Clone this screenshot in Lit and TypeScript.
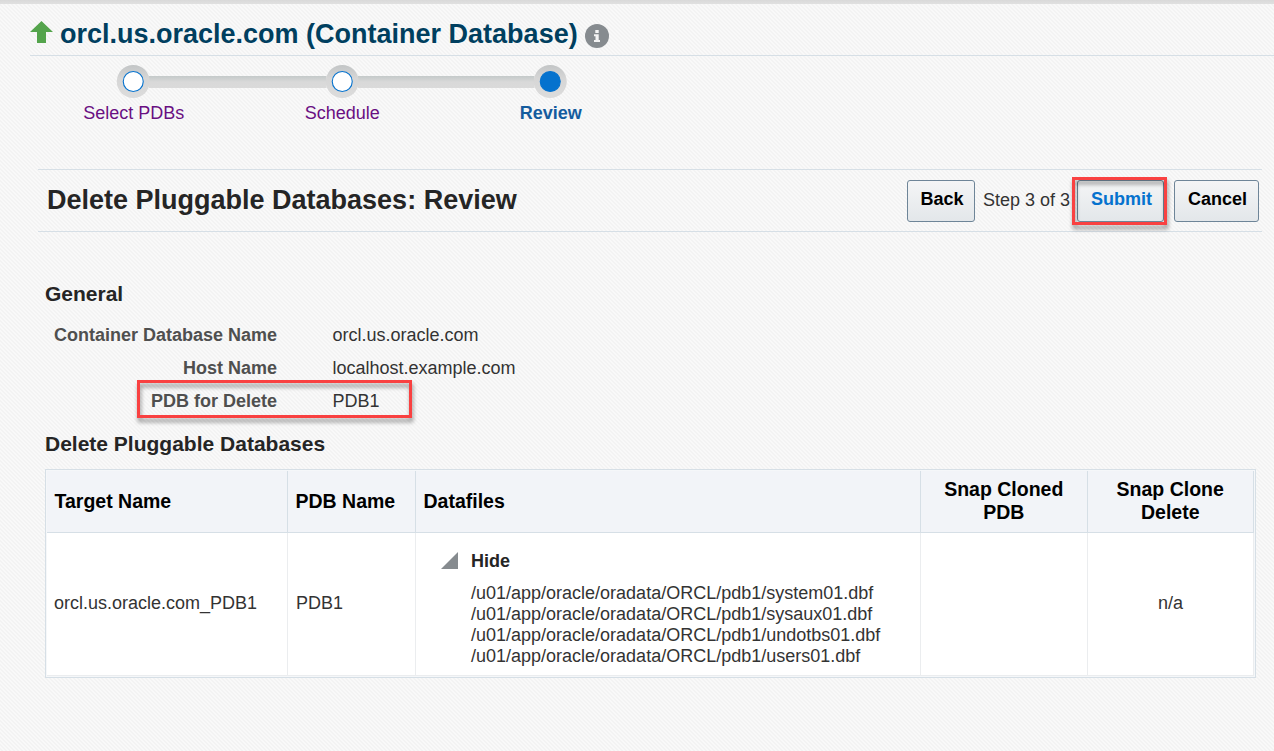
import { LitElement, html, css, svg } from "lit";
import { customElement } from "lit/decorators.js";

interface Step { label: string; current: boolean; }
interface Field { label: string; value: string; marked: boolean; }

@customElement("wizard-train")
class WizardTrain extends LitElement {
  static styles = css`
    :host { display: block; }
    .train { display: grid; grid-template-columns: repeat(3, 208.5px); }
    .step { display: flex; flex-direction: column; align-items: center; font-size: 18px; line-height: 21px; color: #6a0f82; }
    .rail { display: block; width: 208.5px; height: 33px; margin-bottom: 4.5px; overflow: visible; }
    .name { padding-left: 1px; }
    .current { font-weight: bold; color: #145c9e; }
  `;
  steps: Step[] = [
    { label: "Select PDBs", current: false },
    { label: "Schedule", current: false },
    { label: "Review", current: true },
  ];
  render() {
    return html`<div class="train">
      ${this.steps.map((s, i) => html`<div class="step ${s.current ? "current" : ""}">
        <svg class="rail" viewBox="0 0 208.5 33">
          <defs>
            <linearGradient id="bar" x1="0" y1="0" x2="0" y2="1"><stop offset="0" stop-color="#c4c9c9"/><stop offset=".5" stop-color="#d9d9d9"/><stop offset="1" stop-color="#dadada"/></linearGradient>
            <linearGradient id="ring" x1="0" y1="0" x2="0" y2="1"><stop offset="0" stop-color="#c2c5c6"/><stop offset=".4" stop-color="#d6d6d6"/><stop offset="1" stop-color="#dcdcdc"/></linearGradient>
          </defs>
          ${i > 0 ? svg`<rect x="-0.5" y="11" width="89" height="12" fill="url(#bar)"/>` : ""}
          ${i < 2 ? svg`<rect x="120" y="11" width="89" height="12" fill="url(#bar)"/>` : ""}
          <circle cx="104.25" cy="16.5" r="16.5" fill="url(#ring)"/>
          <circle cx="104.25" cy="16.5" r="10" fill=${s.current ? "#0572ce" : "#fff"} stroke="#0572ce" stroke-width="1.1"/>
        </svg>
        <span class="name">${s.label}</span>
      </div>`)}
    </div>`;
  }
}

@customElement("app-root")
class AppRoot extends LitElement {
  static styles = css`
    :host {
      display: block; box-sizing: border-box; width: 1274px; height: 751px; overflow: hidden;
      font: 18px/21px "Liberation Sans", Arial, sans-serif; color: #333;
      background: linear-gradient(45deg, #f9f9f9 25%, #f3f3f3 25% 50%, #f9f9f9 50% 75%, #f3f3f3 75%) 0 0 / 4px 4px;
    }
    * { box-sizing: border-box; }
    .topbar { height: 4px; background: linear-gradient(#d9d9d9, #e0e0e0); }
    .title { display: flex; margin-left: 30px; height: 52px; border-bottom: 1px solid #d6dfe6; }
    .arrow { width: 23px; height: 22px; margin: 17px 7px 0 0; }
    h1 { margin: 15px 0 0; font-size: 27px; line-height: 31px; color: #003f5f; }
    .info { width: 24px; height: 24px; margin: 20px 0 0 7px; }
    wizard-train { margin: 9px 0 0 29px; }
    .heading { display: flex; margin: 45px 12px 0 38px; height: 63px; border: solid #d6dfe6; border-width: 1px 0; padding: 10px 3px 0 9px; }
    h2 { flex: 1; margin: 5px 0 0; font-size: 27px; line-height: 31px; color: #252525; }
    .btn { height: 42px; border: 1px solid #6e8598; border-radius: 3px; background: linear-gradient(#f4f5f6, #e3e7ea); text-align: center; font: bold 18px/36px "Liberation Sans", Arial, sans-serif; color: #000; padding: 0 0 4px 2px; }
    .back { width: 68px; }
    .count { margin: 10px 0 0 8px; width: 94px; white-space: nowrap; }
    .submit { position: relative; width: 87px; color: #0572ce; }
    .cancel { width: 85px; margin-left: 10px; }
    .mark { position: absolute; border: 3px solid #f94141; filter: drop-shadow(1px 4px 2px rgba(0,0,0,.42)); }
    .mark-btn { left: -6px; top: -4px; width: 95px; height: 48px; }
    .mark-row { left: 92px; top: -5px; width: 275px; height: 38px; }
    .body { padding: 50px 19px 0 45px; }
    h3 { margin: 0; font-size: 21px; line-height: 24px; color: #252525; }
    .fields { margin-top: 13px; }
    .field { position: relative; display: grid; grid-template-columns: 232px 1fr; column-gap: 55.5px; height: 33px; line-height: 33px; }
    .label { text-align: right; font-weight: bold; color: #4f4f4f; }
    .databases { margin-top: 14px; }
    .grid { display: grid; grid-template-columns: 241px 128px 505px 167px 166px; grid-template-rows: 62px 143px; width: 1211px; height: 209px; margin-top: 13px; padding: 1px; border: 1px solid #d6dfe6; background: #f5f7f9; }
    .th { display: flex; align-items: center; font-weight: bold; font-size: 19.5px; line-height: 23px; color: #000; background: #f2f4f8; border: solid #d6dfe6; border-width: 0 1px 1px 0; padding: 0 8px 0 7.5px; }
    .center { justify-content: center; text-align: center; }
    .td { display: flex; align-items: center; background: #fff; border: solid #ebedef; border-width: 0 1px 1px 0; padding: 0 7px; }
    .pdb { padding-left: 8px; }
    .files { flex-direction: column; align-items: flex-start; padding: 18px 0 0 25px; }
    .toggle { display: flex; font-weight: bold; color: #252525; }
    .tri { width: 17px; height: 17px; margin: 1px 13px 0 0; }
    .list { margin: 11px 0 0 30px; line-height: 21px; }
  `;
  fields: Field[] = [
    { label: "Container Database Name", value: "orcl.us.oracle.com", marked: false },
    { label: "Host Name", value: "localhost.example.com", marked: false },
    { label: "PDB for Delete", value: "PDB1", marked: true },
  ];
  files = ["system01.dbf", "sysaux01.dbf", "undotbs01.dbf", "users01.dbf"];
  render() {
    return html`
      <div class="topbar"></div>
      <div class="title">
        <svg class="arrow" viewBox="0 0 23 22"><path d="M11.5 0L23 11H16V22H7V11H0Z" fill="#54a44c"/></svg>
        <h1>orcl.us.oracle.com (Container Database)</h1>
        <svg class="info" viewBox="0 0 24 24"><circle cx="12" cy="12" r="12" fill="#868b8f"/><path d="M10.3 6h3.4v3h-3.4zM9 10.2h4.7V16H15v2H9v-2h1.5v-3.8H9z" fill="#f4f4f4"/></svg>
      </div>
      <wizard-train></wizard-train>
      <div class="heading">
        <h2>Delete Pluggable Databases: Review</h2>
        <button class="btn back">Back</button>
        <span class="count">Step 3 of 3</span>
        <button class="btn submit">Submit<span class="mark mark-btn"></span></button>
        <button class="btn cancel">Cancel</button>
      </div>
      <div class="body">
        <h3>General</h3>
        <div class="fields">
          ${this.fields.map((f) => html`<div class="field"><span class="label">${f.label}</span><span>${f.value}</span>${f.marked ? html`<span class="mark mark-row"></span>` : ""}</div>`)}
        </div>
        <h3 class="databases">Delete Pluggable Databases</h3>
        <div class="grid">
          <div class="th">Target Name</div><div class="th">PDB Name</div><div class="th">Datafiles</div>
          <div class="th center">Snap Cloned<br>PDB</div><div class="th center">Snap Clone<br>Delete</div>
          <div class="td">orcl.us.oracle.com_PDB1</div><div class="td pdb">PDB1</div>
          <div class="td files">
            <div class="toggle"><svg class="tri" viewBox="0 0 17 17"><path d="M17 0V17H0Z" fill="#868b8f"/></svg>Hide</div>
            <div class="list">${this.files.map((f) => html`<div>/u01/app/oracle/oradata/ORCL/pdb1/${f}</div>`)}</div>
          </div>
          <div class="td"></div><div class="td center">n/a</div>
        </div>
      </div>`;
  }
}
